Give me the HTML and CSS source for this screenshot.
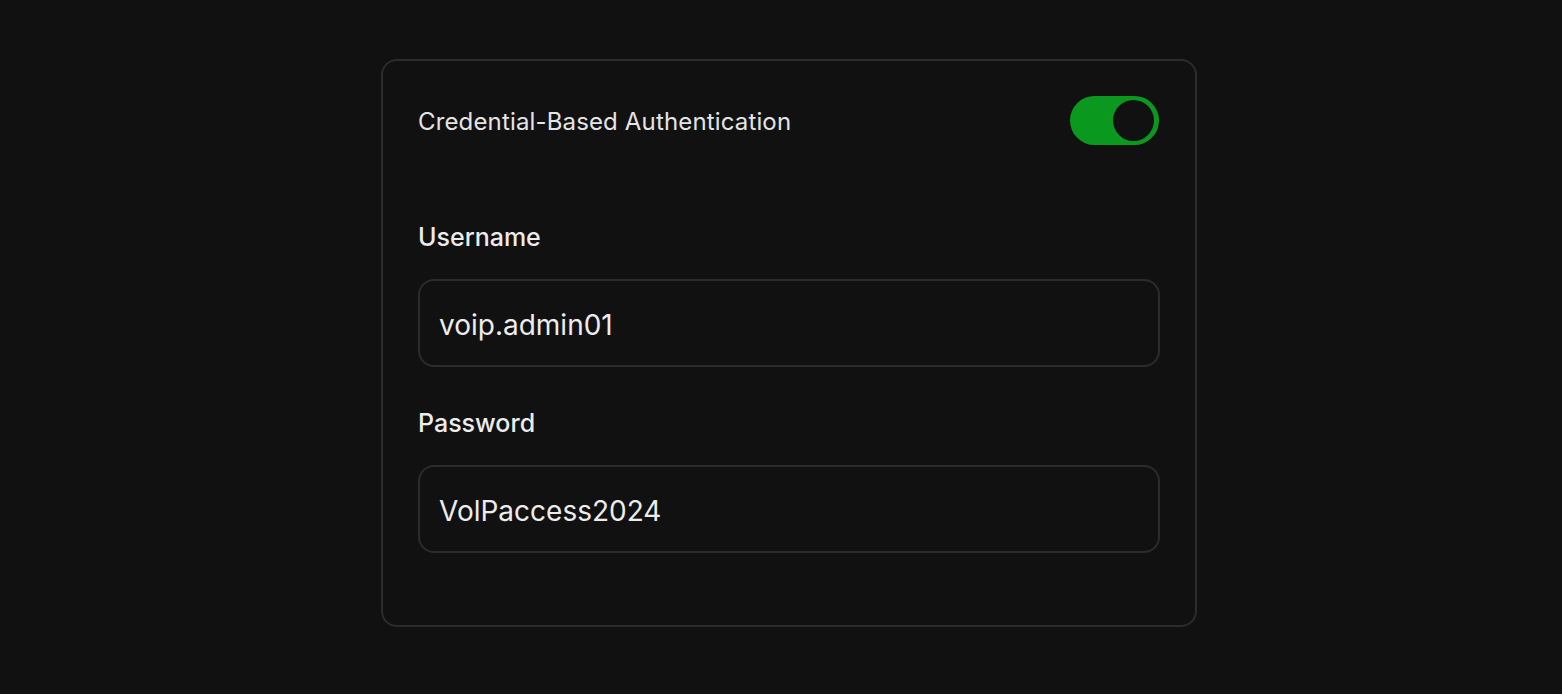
FILE: index.html
```html
<!DOCTYPE html>
<html>
<head>
<meta charset="utf-8">
<link rel="stylesheet" href="styles.css">
</head>
<body>
<div class="page">
  <section class="card">
    <div class="card-header">
      <span class="card-title">Credential-Based Authentication</span>
      <div class="toggle" role="switch" aria-checked="true"><span class="knob"></span></div>
    </div>
    <div class="field field-first">
      <label class="field-label">Username</label>
      <div class="input">voip.admin01</div>
    </div>
    <div class="field">
      <label class="field-label">Password</label>
      <div class="input">VolPaccess2024</div>
    </div>
  </section>
</div>
</body>
</html>
```
FILE: styles.css
```css
html, body {
  margin: 0;
  padding: 0;
  background: #111111;
}
body {
  font-family: Inter, "Liberation Sans", Arial, sans-serif;
  color: #e8e8e8;
}
.page {
  padding: 59px 0 0 381px;
}
.card {
  box-sizing: border-box;
  width: 816px;
  height: 568px;
  border: 2px solid #2c2c2c;
  border-radius: 16px;
  background: #111111;
  padding: 35px 35px 0 35px;
}
.card-header {
  display: flex;
  align-items: center;
  justify-content: space-between;
  height: 49px;
}
.card-title {
  font-size: 24px;
  line-height: 30px;
  padding-top: 2px;
  letter-spacing: 0.15px;
  color: #e4e4e4;
}
.toggle {
  box-sizing: border-box;
  width: 89px;
  height: 49px;
  border-radius: 25px;
  background: #0a991e;
  padding: 4px 5px 4px 4px;
  display: flex;
  justify-content: flex-end;
  margin-right: 1px;
}
.knob {
  width: 41px;
  height: 41px;
  border-radius: 50%;
  background: #111111;
}
.field {
  margin-top: 41px;
}
.field-first {
  margin-top: 77px;
}
.field-label {
  display: block;
  font-size: 25px;
  line-height: 30px;
  font-weight: 500;
  color: #ececec;
  margin-bottom: 27px;
}
.input {
  box-sizing: border-box;
  height: 88px;
  border: 2px solid #2c2c2c;
  border-radius: 16px;
  padding: 4px 19px 0;
  display: flex;
  align-items: center;
  font-size: 28px;
  color: #ececec;
}
```
